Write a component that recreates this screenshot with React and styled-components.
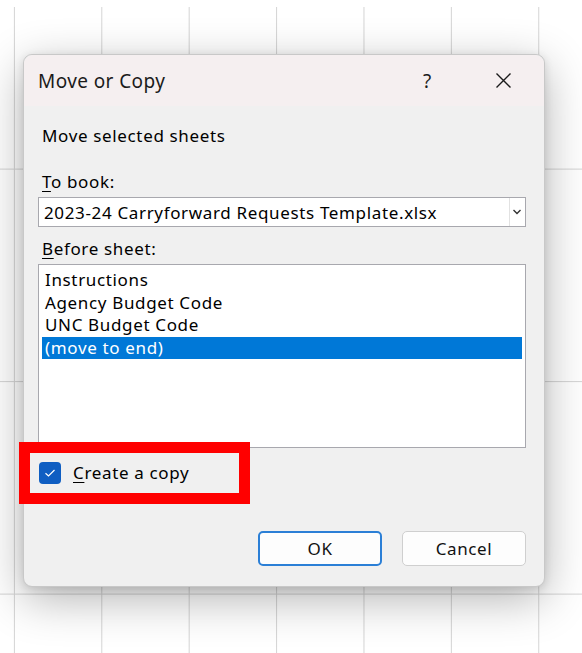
import React from "react";
import styled, { createGlobalStyle } from "styled-components";

const Global = createGlobalStyle`
  html, body { margin: 0; padding: 0; }
  body {
    font-family: "Noto Sans", "Open Sans", "Liberation Sans", sans-serif;
    background: #ffffff;
  }
`;

const Sheet = styled.div`
  position: relative;
  width: 582px;
  height: 653px;
  overflow: hidden;
  background-color: #ffffff;
  background-image:
    linear-gradient(to right, transparent 0 14px, #d4d4d4 14px 15px, transparent 15px),
    linear-gradient(to bottom, transparent 0 169px, #d4d4d4 169px 170px, transparent 170px);
  background-size: 87.4px 100%, 100% 212.5px;
  background-position: 0 7px, 0 0;
  background-repeat: repeat-x, repeat-y;
  padding: 54px 37px 0 23px;
  box-sizing: border-box;
`;

const Dialog = styled.div`
  position: relative;
  width: 522px;
  height: 533px;
  box-sizing: border-box;
  background: #f0f0f0;
  border: 1px solid #c8c8c8;
  border-radius: 9px;
  box-shadow: 0 12px 46px rgba(0, 0, 0, 0.3), 0 2px 8px rgba(0, 0, 0, 0.12);
  display: flex;
  flex-direction: column;
`;

const TitleBar = styled.div`
  height: 51px;
  flex: none;
  display: flex;
  align-items: center;
  background: #f5eff0;
  border-radius: 9px 9px 0 0;
  padding: 0 0 0 14px;
`;

const Title = styled.div`
  flex: 1;
  font-size: 19px;
  letter-spacing: 0.4px;
  color: #1b1b1b;
`;

const TitleButton = styled.div`
  width: ${(p) => p.$w}px;
  display: flex;
  justify-content: center;
  align-items: center;
  font-size: 19px;
  color: #1b1b1b;
`;

const Body = styled.div`
  flex: 1;
  display: flex;
  flex-direction: column;
  padding: 19px 18px 20px 14px;
  font-size: 17px;
  letter-spacing: 0.65px;
`;

const Text = styled.div`
  line-height: 22px;
  color: #000;
  padding-left: 4px;
  margin-top: ${(p) => p.$top || 0}px;
`;

const Key = styled.span`
  text-decoration: underline;
  text-underline-offset: 3px;
`;

const Select = styled.div`
  margin-top: 4px;
  height: 30px;
  box-sizing: border-box;
  background: #fff;
  border: 1px solid #a8a8ae;
  display: flex;
  align-items: center;
`;

const SelectValue = styled.div`
  flex: 1;
  padding-left: 5px;
  color: #000;
  white-space: nowrap;
`;

const SelectArrow = styled.div`
  width: 14px;
  align-self: stretch;
  border-left: 1px solid #e2e2e2;
  display: flex;
  align-items: center;
  justify-content: center;
  margin-right: 1px;
`;

const ListBox = styled.div`
  margin-top: 4px;
  height: 184px;
  box-sizing: border-box;
  background: #fff;
  border: 1px solid #a8a8ae;
  padding: 4px 3px;
  display: flex;
  flex-direction: column;
`;

const ListItem = styled.div`
  height: 22.5px;
  line-height: 22.5px;
  padding-left: 3px;
  color: ${(p) => (p.$selected ? "#ffffff" : "#000")};
  background: ${(p) => (p.$selected ? "#0078d7" : "transparent")};
`;

const CheckRow = styled.div`
  margin-top: 13px;
  display: flex;
  align-items: center;
  gap: 12px;
  padding-left: 1px;
`;

const CheckBox = styled.div`
  width: 22px;
  height: 22px;
  box-sizing: border-box;
  border-radius: 4px;
  background: #0f5ec2;
  display: flex;
  align-items: center;
  justify-content: center;
`;

const CheckLabel = styled.div`
  color: #000;
`;

const Footer = styled.div`
  margin-top: auto;
  display: flex;
  justify-content: flex-end;
  gap: 20px;
`;

const Button = styled.button`
  width: 124px;
  height: 35px;
  box-sizing: border-box;
  border-radius: 5px;
  background: #fdfdfd;
  font-family: inherit;
  font-size: 17px;
  letter-spacing: 0.6px;
  color: #111;
  border: ${(p) => (p.$primary ? "2px solid #2b7fd6" : "1px solid #cfcfcf")};
  padding: 0;
`;

const Highlight = styled.div`
  position: absolute;
  left: -5px;
  top: 387px;
  width: 231px;
  height: 62px;
  box-sizing: border-box;
  border: 11px solid #ff0000;
  pointer-events: none;
`;

export default function App() {
  const sheets = ["Instructions", "Agency Budget Code", "UNC Budget Code", "(move to end)"];
  return (
    <>
      <Global />
      <Sheet>
        <Dialog>
          <TitleBar>
            <Title>Move or Copy</Title>
            <TitleButton $w={70}>?</TitleButton>
            <TitleButton $w={82}>
              <svg width="17" height="17" viewBox="0 0 17 17">
                <path d="M1.5 1.5 L15.5 15.5 M15.5 1.5 L1.5 15.5" stroke="#1b1b1b" strokeWidth="1.4" fill="none" />
              </svg>
            </TitleButton>
          </TitleBar>
          <Body>
            <Text>Move selected sheets</Text>
            <Text $top={24}>
              <Key>T</Key>o book:
            </Text>
            <Select>
              <SelectValue>2023-24 Carryforward Requests Template.xlsx</SelectValue>
              <SelectArrow>
                <svg width="10" height="6" viewBox="0 0 10 6">
                  <path d="M1.5 1 L5 4.5 L8.5 1" stroke="#333" strokeWidth="1.4" fill="none" />
                </svg>
              </SelectArrow>
            </Select>
            <Text $top={11}>
              <Key>B</Key>efore sheet:
            </Text>
            <ListBox>
              {sheets.map((s, i) => (
                <ListItem key={s} $selected={i === sheets.length - 1}>
                  {s}
                </ListItem>
              ))}
            </ListBox>
            <CheckRow>
              <CheckBox>
                <svg width="12" height="10" viewBox="0 0 12 10">
                  <path d="M1.5 5.2 L4.5 8 L10.5 2" stroke="#ffffff" strokeWidth="1.2" fill="none" />
                </svg>
              </CheckBox>
              <CheckLabel>
                <Key>C</Key>reate a copy
              </CheckLabel>
            </CheckRow>
            <Footer>
              <Button $primary>OK</Button>
              <Button>Cancel</Button>
            </Footer>
          </Body>
          <Highlight />
        </Dialog>
      </Sheet>
    </>
  );
}
